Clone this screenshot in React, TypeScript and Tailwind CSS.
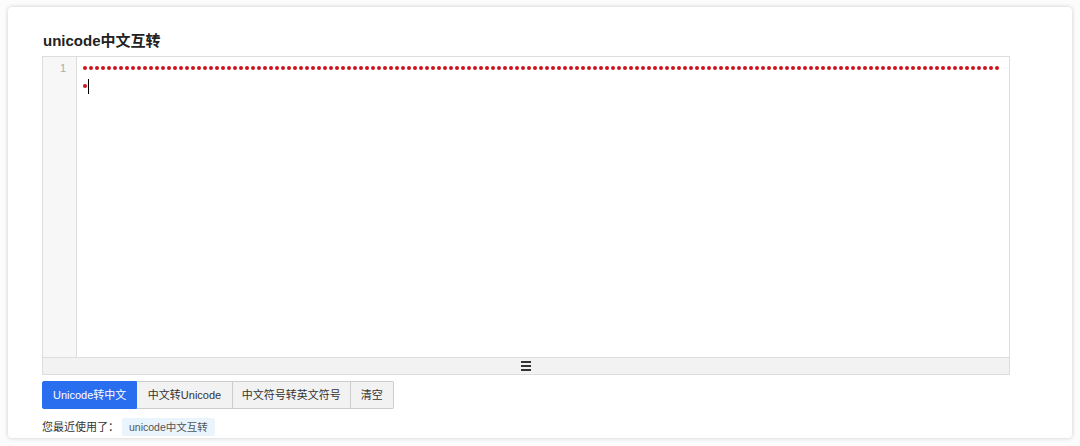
import React from "react";

export default function App() {
  const dots = Array.from({ length: 154 });
  return (
    <div className="w-[1080px] h-[446px] bg-[#fcfcfc] overflow-hidden" style={{ fontFamily: '"Helvetica Neue", "Liberation Sans", "Noto Sans CJK SC", sans-serif' }}>
      <div className="ml-[8px] mt-[7px] w-[1064px] h-[431px] bg-white rounded-[4px] shadow-[0_0_4px_rgba(0,0,0,0.2)] pl-[34px] pr-[62px] pt-[24px]">
        <h1 className="text-[15px] leading-[20px] font-bold text-[#222] pl-[1px]">unicode中文互转</h1>
        <div className="mt-[5px] border border-[#ddd] w-[968px]">
          <div className="flex h-[300px]">
            <div className="w-[34px] shrink-0 bg-[#f7f7f7] border-r border-[#ddd] text-[#aaa] text-[11px] text-right pr-[10px] pt-[2px] leading-[18px]" style={{ fontFamily: '"Liberation Sans", sans-serif' }}>1</div>
            <div className="flex-1 pl-[5px] pt-[2px]">
              <div className="flex flex-wrap w-[920px]">
                {dots.map((_, i) => (
                  <span key={i} className="w-[6px] h-[18px] flex items-center justify-center">
                    <span className="w-[3.5px] h-[3.5px] rounded-full bg-[#d0141e]" />
                  </span>
                ))}
                <span className="h-[18px] flex items-center">
                  <span className="w-[1px] h-[15px] bg-black" />
                </span>
              </div>
            </div>
          </div>
          <div className="h-[17px] bg-[#f2f2f2] border-t border-[#ddd] flex items-center justify-center">
            <div className="flex flex-col gap-[2px] w-[10px]">
              <span className="h-[2px] bg-[#333]" />
              <span className="h-[2px] bg-[#333]" />
              <span className="h-[2px] bg-[#333]" />
            </div>
          </div>
        </div>
        <div className="flex mt-[6px] text-[11px] leading-[26px]">
          <button className="h-[28px] px-[10px] bg-[#2a6ef0] text-white border border-[#2a6ef0] rounded-l-[2px]">Unicode转中文</button>
          <button className="h-[28px] px-[10.5px] bg-[#f2f2f2] text-[#333] border border-[#ccc] border-l-0">中文转Unicode</button>
          <button className="h-[28px] px-[9px] bg-[#f2f2f2] text-[#333] border border-[#ccc] border-l-0">中文符号转英文符号</button>
          <button className="h-[28px] px-[10px] bg-[#f2f2f2] text-[#333] border border-[#ccc] border-l-0 rounded-r-[2px]">清空</button>
        </div>
        <div className="flex items-center mt-[9px] text-[11px] text-[#333]">
          <span>您最近使用了：</span>
          <span className="ml-[3px] px-[7px] h-[18px] leading-[18px] bg-[#eaf4fd] text-[#555] text-[10.5px] rounded-[2px]">unicode中文互转</span>
        </div>
      </div>
    </div>
  );
}
